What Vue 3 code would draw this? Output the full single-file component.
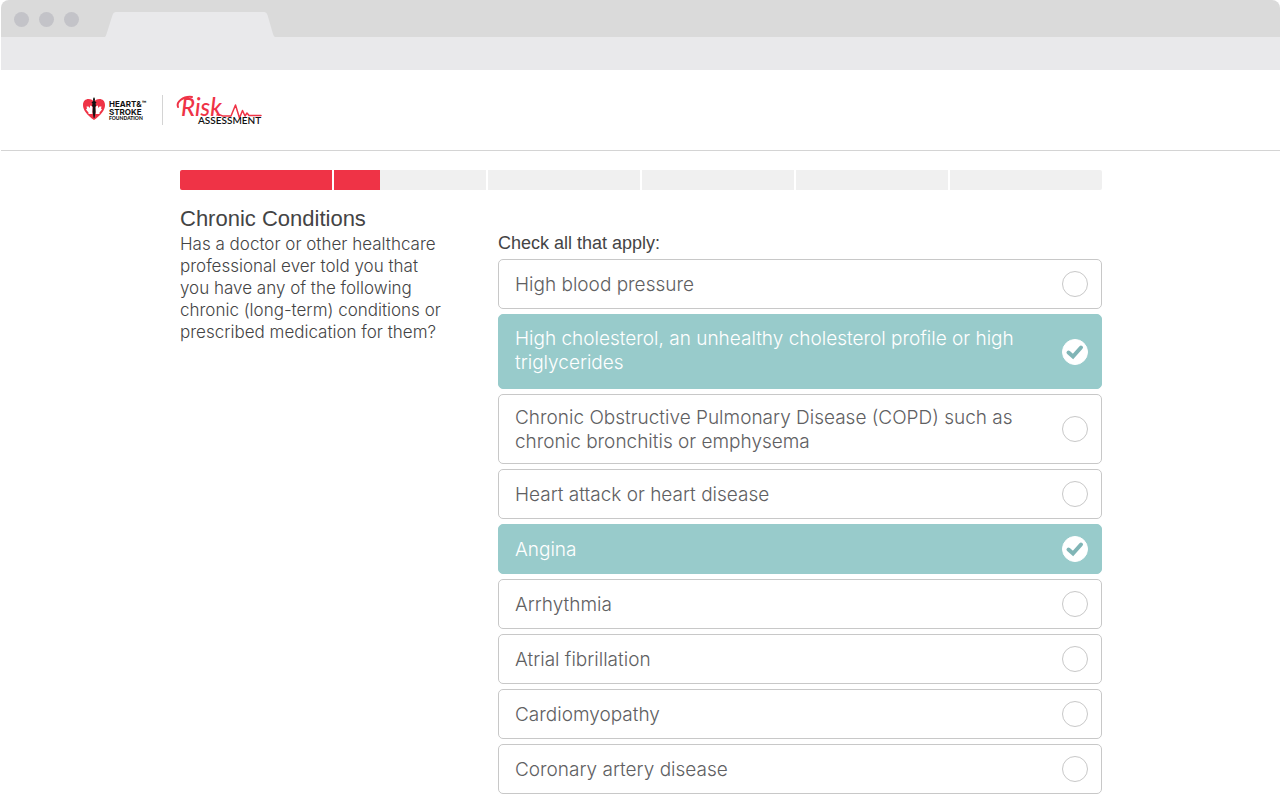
<script setup>
import { ref } from 'vue'

const steps = ref([100, 30, 0, 0, 0, 0])

const conditions = ref([
  { id: 'blood-pressure', label: 'High blood pressure', checked: false },
  {
    id: 'cholesterol',
    label: 'High cholesterol, an unhealthy cholesterol profile or high triglycerides',
    checked: true,
    tall: true,
  },
  {
    id: 'copd',
    label: 'Chronic Obstructive Pulmonary Disease (COPD) such as chronic bronchitis or emphysema',
    checked: false,
  },
  { id: 'heart-attack', label: 'Heart attack or heart disease', checked: false },
  { id: 'angina', label: 'Angina', checked: true },
  { id: 'arrhythmia', label: 'Arrhythmia', checked: false },
  { id: 'atrial', label: 'Atrial fibrillation', checked: false },
  { id: 'cardiomyopathy', label: 'Cardiomyopathy', checked: false },
  { id: 'coronary', label: 'Coronary artery disease', checked: false },
])
</script>

<template>
  <div class="window">
    <div class="chrome">
      <div class="tabbar">
        <div class="dots"><i></i><i></i><i></i></div>
        <svg class="tab" width="170" height="25" viewBox="0 0 170 25" aria-hidden="true">
          <path d="M0 25 C1 24 1 23 1.500 22 L7.500 3 Q8.500 0 11 0 H159 Q161.500 0 162.500 3 L168 22 Q169 25 170 25 Z" fill="#e9e9eb" />
        </svg>
      </div>
      <div class="toolbar"></div>
    </div>

    <header class="header">
      <svg class="foundation" width="66" height="30" viewBox="0 0 66 30" role="img" aria-label="Heart and Stroke Foundation">
        <path d="M11 25 C4 20 0 15 0 10 C0 6 2.500 4 5.500 4 C8 4 10 5 11 7 C12 5 14 4 16.500 4 C19.500 4 22 6 22 10 C22 15 18 20 11 25 Z" fill="#ef3346" />
        <path d="M9.500 19 L5.500 19 L5.500 17.500 L3 14.500 L4 13.500 L3.500 11.500 L5.500 11.500 L7 13 L7 10.500 L9.500 11.500 Z M12.500 19 L16.500 19 L16.500 17.500 L19 14.500 L18 13.500 L18.500 11.500 L16.500 11.500 L15 13 L15 10.500 L12.500 11.500 Z" fill="#fff" />
        <path d="M11 2 L12 4 L11.800 6 L13.500 7.500 L12.500 8.500 L13 11 L12.300 12 L12.600 17 L11.500 23 H10.700 L9.600 17 L9.900 12 L9 11 L9.500 8.500 L8.500 7.500 L10.200 6 L10 4 Z" fill="#111" />
        <text x="26" y="12" class="mark-lg">HEART&amp;</text>
        <text x="59" y="10" class="mark-tm">™</text>
        <text x="26" y="20" class="mark-lg">STROKE</text>
        <text x="26" y="25" class="mark-sm">FOUNDATION</text>
      </svg>
      <span class="divider"></span>
      <svg class="risk" width="88" height="34" viewBox="0 0 88 34" role="img" aria-label="Risk Assessment">
        <path d="M2 14 C0 9 7 3 16 4" class="line swash" />
        <text x="5" y="23" class="script">Risk</text>
        <path d="M41 22 C43 20 45 23 47 23 H55 L59.500 12 L63.500 25 L66.500 17.500 L69 23 L71 20 L73 22.500 H85" class="line" />
        <text x="22" y="31" class="assessment">ASSESSMENT</text>
      </svg>
    </header>

    <main class="page">
      <div class="progress" role="progressbar" aria-label="Survey progress" aria-valuenow="22" aria-valuemin="0" aria-valuemax="100">
        <div v-for="(value, i) in steps" :key="i" class="step">
          <div class="fill" :style="{ width: value + '%' }"></div>
        </div>
      </div>

      <div class="columns">
        <section class="intro">
          <h1>Chronic Conditions</h1>
          <p>
            Has a doctor or other healthcare professional ever told you that you have any of the
            following chronic (long-term) conditions or prescribed medication for them?
          </p>
        </section>

        <fieldset class="options">
          <legend>Check all that apply:</legend>
          <label
            v-for="item in conditions"
            :key="item.id"
            :for="item.id"
            class="option"
            :class="{ checked: item.checked, tall: item.tall }"
          >
            <span class="text">{{ item.label }}</span>
            <span class="control">
              <input :id="item.id" v-model="item.checked" type="checkbox" />
              <svg v-if="item.checked" width="26" height="26" viewBox="0 0 26 26" aria-hidden="true">
                <path d="M6.500 13.500 L11 17.500 L19 8.500" />
              </svg>
            </span>
          </label>
        </fieldset>
      </div>
    </main>
  </div>
</template>

<style>
body {
  margin: 0;
  background: #fff;
}
</style>

<style scoped>
.window {
  margin-left: 1px;
  color: #444445;
  font-family: "Liberation Sans", Arial, sans-serif;
}
.chrome {
  overflow: hidden;
  border-radius: 8px 8px 0 0;
}
.tabbar {
  display: flex;
  align-items: flex-end;
  gap: 26px;
  height: 37px;
  padding-left: 13px;
  background: #dadada;
}
.dots {
  display: flex;
  gap: 10px;
  padding-bottom: 10px;
}
.dots i {
  width: 15px;
  height: 15px;
  border-radius: 50%;
  background: #c3c3c8;
}
.tab {
  display: block;
}
.toolbar {
  height: 33px;
  background: #e9e9eb;
}
.header {
  display: flex;
  align-items: center;
  height: 80px;
  padding-left: 82px;
  border-bottom: 1px solid #d4d4d4;
}
.divider {
  width: 1px;
  height: 30px;
  margin: 0 13px 0 13px;
  background: #d4d4d4;
}
.foundation text,
.assessment {
  fill: #111;
  font-family: Lato, sans-serif;
}
.foundation .mark-lg {
  font-family: Inter, sans-serif;
  font-size: 8px;
  font-weight: 700;
}
.mark-sm {
  font-size: 5px;
  font-weight: 900;
}
.mark-tm {
  font-size: 6px;
  font-weight: 900;
}
.risk {
  overflow: visible;
}
.script {
  fill: #ef3346;
  font-family: Lato, sans-serif;
  font-size: 24px;
  font-style: italic;
  font-weight: 500;
}
.line {
  fill: none;
  stroke: #ef3346;
  stroke-width: 1.5;
  stroke-linejoin: round;
  stroke-linecap: round;
}
.swash {
  stroke-width: 2;
}
.assessment {
  font-size: 10px;
  font-weight: 600;
}
.page {
  padding: 19px 178px 5px 179px;
}
.progress {
  display: grid;
  grid-template-columns: repeat(6, 1fr);
  gap: 2px;
  height: 20px;
  overflow: hidden;
  border-radius: 2px;
}
.step {
  background: #f0f0f0;
}
.fill {
  height: 100%;
  background: #ef3346;
}
.columns {
  display: grid;
  grid-template-columns: 270px 1fr;
  column-gap: 48px;
}
.intro {
  padding-top: 15px;
}
h1 {
  margin: 0;
  font-size: 22px;
  font-weight: 400;
  line-height: 28px;
}
p {
  margin: 0;
  font-family: Inter, "Liberation Sans", sans-serif;
  font-size: 17px;
  font-weight: 300;
  line-height: 22px;
}
.options {
  display: flex;
  flex-direction: column;
  gap: 5px;
  min-width: 0;
  margin: 0;
  padding: 42px 0 0;
  border: 0;
}
legend {
  float: left;
  padding: 0;
  font-size: 18px;
  line-height: 22px;
}
.option {
  display: flex;
  align-items: center;
  justify-content: space-between;
  box-sizing: border-box;
  min-height: 50px;
  padding: 8px 13px 8px 16px;
  border: 1px solid #c8c8c8;
  border-radius: 5px;
  color: #606062;
  font-family: Inter, "Liberation Sans", sans-serif;
  font-size: 19px;
  font-weight: 300;
  line-height: 24px;
}
.option.checked {
  border-color: #98cbcb;
  background: #98cbcb;
  color: #fff;
}
.option.tall {
  min-height: 75px;
}
.tall .text {
  align-self: flex-start;
}
.text {
  max-width: 520px;
  padding: 3px 0 1px;
}
.tall .text {
  padding-top: 4px;
}
.control {
  display: grid;
  flex: none;
}
.control input {
  grid-area: 1 / 1;
  width: 26px;
  height: 26px;
  margin: 0;
  border: 1px solid #c8c8c8;
  border-radius: 50%;
  appearance: none;
}
.control input:checked {
  border-color: #fff;
  background: #fff;
}
.control svg {
  grid-area: 1 / 1;
  pointer-events: none;
}
.control path {
  fill: none;
  stroke: #80b5b6;
  stroke-width: 4;
  stroke-linecap: round;
}
</style>
